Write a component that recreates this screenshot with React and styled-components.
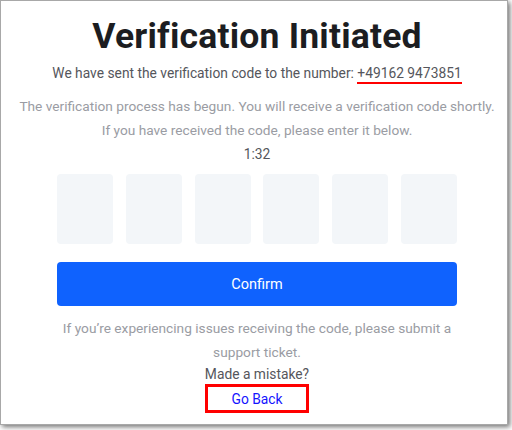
import React from "react";
import styled, { createGlobalStyle } from "styled-components";

const Global = createGlobalStyle`
  html, body { margin: 0; padding: 0; background: #fff; }
  body { font-family: Roboto, "Liberation Sans", sans-serif; }
  #root { width: 512px; height: 430px; }
`;

const Frame = styled.div`
  box-sizing: border-box;
  width: 512px;
  height: 430px;
  padding: 1px 5px 6px 1px;
  background: #fff;
`;

const Card = styled.div`
  box-sizing: border-box;
  height: 100%;
  background: #fff;
  box-shadow: 0 0 0 1px #a8a8a8, 2px 2px 5px 1px rgba(0,0,0,0.55);
  display: flex;
  flex-direction: column;
  align-items: center;
  padding: 9px 0 0 6px;
`;

const Title = styled.h1`
  margin: 0;
  font-size: 35.5px;
  font-weight: 700;
  color: #1c1d21;
  line-height: 52px;
  letter-spacing: 0.2px;
`;

const Sent = styled.p`
  margin: 0;
  font-size: 13.8px;
  line-height: 22px;
  color: #55565c;
`;

const Phone = styled.span`
  color: #55565c;
  border-bottom: 2px solid #f00;
  padding-bottom: 1px;
`;

const Muted = styled.p`
  margin: ${p => p.$mt || 0}px 0 0;
  font-size: 13.7px;
  line-height: 24px;
  color: #9a9ca3;
  text-align: center;
  max-width: ${p => p.$w || 500}px;
`;

const Timer = styled.div`
  font-size: 13.8px;
  line-height: 24px;
  color: #55565c;
`;

const Column = styled.div`
  width: 400px;
  display: flex;
  flex-direction: column;
  align-items: center;
`;

const Boxes = styled.div`
  width: 100%;
  display: flex;
  justify-content: space-between;
  margin-top: 8px;
`;

const CodeBox = styled.div`
  width: 56px;
  height: 70px;
  border-radius: 4px;
  background: #f3f6f9;
`;

const Confirm = styled.button`
  width: 100%;
  height: 44px;
  margin-top: 18px;
  border: none;
  border-radius: 4px;
  background: #0f62fe;
  color: #fff;
  font-family: Roboto, "Liberation Sans", sans-serif;
  font-size: 14.5px;
`;

const Mistake = styled.div`
  font-size: 13.8px;
  line-height: 20px;
  color: #55565c;
`;

const GoBack = styled.a`
  display: flex;
  align-items: center;
  justify-content: center;
  box-sizing: border-box;
  width: 104px;
  height: 29px;
  border: 3px solid #f00;
  color: #1414ff;
  font-size: 13.8px;
  text-decoration: none;
  margin-top: 0;
`;

export default function App() {
  return (
    <>
      <Global />
      <Frame>
        <Card>
          <Title>Verification Initiated</Title>
          <Sent>
            We have sent the verification code to the number: <Phone>+49162 9473851</Phone>
          </Sent>
          <Muted $mt={10}>
            The verification process has begun. You will receive a verification code shortly.
            <br />
            If you have received the code, please enter it below.
          </Muted>
          <Timer>1:32</Timer>
          <Column>
            <Boxes>
              {[0, 1, 2, 3, 4, 5].map(i => (
                <CodeBox key={i} />
              ))}
            </Boxes>
            <Confirm>Confirm</Confirm>
            <Muted $mt={10} $w={400}>
              If you’re experiencing issues receiving the code, please submit a support ticket.
            </Muted>
            <Mistake>Made a mistake?</Mistake>
            <GoBack href="#">Go Back</GoBack>
          </Column>
        </Card>
      </Frame>
    </>
  );
}
